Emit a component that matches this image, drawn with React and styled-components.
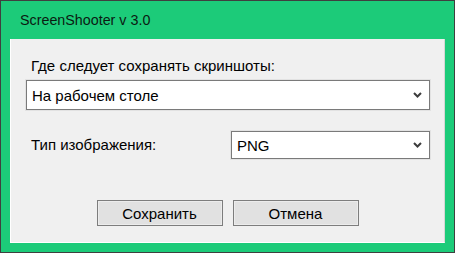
import React from "react";
import styled, { createGlobalStyle } from "styled-components";

const GlobalStyle = createGlobalStyle`
  html, body {
    margin: 0;
    padding: 0;
    background: #ffffff;
  }
  body {
    font-family: "Liberation Sans", Arial, sans-serif;
  }
`;

const Window = styled.div`
  box-sizing: border-box;
  width: 455px;
  height: 253px;
  border: 1px solid #3f3f3f;
  background: #1ccb79;
  display: flex;
  flex-direction: column;
`;

const TitleBar = styled.div`
  height: 38px;
  display: flex;
  align-items: center;
  padding-left: 19px;
  padding-bottom: 1px;
  box-sizing: border-box;
  font-size: 14.3px;
  color: #0b1a12;
`;

const Body = styled.div`
  flex: 1;
  margin: 0 9px 9px 9px;
  background: #f0f0f0;
  border-left: 1px solid #ffffff;
  border-bottom: 1px solid #ffffff;
  border-right: 1px solid #d6d6d6;
  display: flex;
  flex-direction: column;
  padding: 18px 14px 0 15px;
  font-size: 15px;
  color: #000;
`;

const Label = styled.div`
  padding-left: ${(p) => p.$indent || 5}px;
  line-height: 18px;
  white-space: nowrap;
`;

const Select = styled.div`
  box-sizing: border-box;
  height: ${(p) => p.$h}px;
  width: ${(p) => (p.$w ? `${p.$w}px` : "auto")};
  flex: ${(p) => (p.$w ? "none" : "1")};
  background: #ffffff;
  border: 1px solid #7a7a7a;
  box-shadow: 0 0 0 1px #e2e2e2;
  display: flex;
  align-items: center;
  justify-content: space-between;
  padding: 0 7px 0 5px;
`;

const SelectText = styled.span`
  white-space: nowrap;
`;

const Row = styled.div`
  display: flex;
  align-items: center;
  justify-content: space-between;
  margin-top: ${(p) => p.$mt}px;
`;

const Buttons = styled.div`
  display: flex;
  justify-content: center;
  gap: 10px;
  margin-top: 41px;
  margin-left: -1px;
`;

const Button = styled.button`
  box-sizing: border-box;
  width: 126px;
  height: 26px;
  background: #e1e1e1;
  border: 1px solid #7d7d7d;
  box-shadow: inset 0 0 0 1px #ececec;
  font-family: "Liberation Sans", Arial, sans-serif;
  font-size: 15px;
  color: #000;
  padding: 0;
`;

const Chevron = () => (
  <svg width="9" height="6" viewBox="0 0 9 6">
    <path d="M1 1 L4.5 4.5 L8 1" fill="none" stroke="#3c3c3c" strokeWidth="2" />
  </svg>
);

export default function App() {
  return (
    <>
      <GlobalStyle />
      <Window>
        <TitleBar>ScreenShooter v 3.0</TitleBar>
        <Body>
          <Label>Где следует сохранять скриншоты:</Label>
          <Row $mt={5}>
            <Select $h={30}>
              <SelectText>На рабочем столе</SelectText>
              <Chevron />
            </Select>
          </Row>
          <Row $mt={21}>
            <Label>Тип изображения:</Label>
            <Select $h={28} $w={199}>
              <SelectText>PNG</SelectText>
              <Chevron />
            </Select>
          </Row>
          <Buttons>
            <Button>Сохранить</Button>
            <Button>Отмена</Button>
          </Buttons>
        </Body>
      </Window>
    </>
  );
}
